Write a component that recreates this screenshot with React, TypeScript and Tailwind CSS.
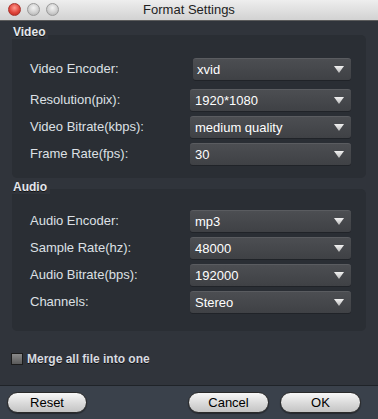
import React from "react";

const font = { fontFamily: '"Liberation Sans", Arial, sans-serif' };

function Arrow() {
  return (
    <svg width="10" height="7" viewBox="0 0 10 7" className="shrink-0">
      <defs>
        <linearGradient id="ag" x1="0" y1="0" x2="0" y2="1">
          <stop offset="0" stopColor="#f2f2f2" />
          <stop offset="1" stopColor="#b8b8b8" />
        </linearGradient>
      </defs>
      <polygon points="0,0 10,0 5,7" fill="url(#ag)" />
    </svg>
  );
}

function Select({ value, narrow }: { value: string; narrow?: boolean }) {
  return (
    <div
      className={`flex items-center justify-between h-[22px] rounded-[3px] bg-gradient-to-b from-[#4c4e52] to-[#3f4145] border-t border-[#5a5c60] shadow-[0_1px_0_#202328] text-white text-[13px] leading-[22px] ${
        narrow ? "w-[158px] ml-[3px] pl-[4px] pr-[7px]" : "w-[161px] pl-[5px] pr-[7px]"
      }`}
    >
      <span>{value}</span>
      <Arrow />
    </div>
  );
}

function Row({ label, value, narrow }: { label: string; value: string; narrow?: boolean }) {
  return (
    <div className="flex items-center justify-between">
      <span className="text-[13px] text-[#dde0e5]">{label}</span>
      <Select value={value} narrow={narrow} />
    </div>
  );
}

function Legend({ text, className }: { text: string; className: string }) {
  return (
    <div
      className={`relative z-10 self-start bg-[#30343b] h-[14px] leading-[14px] pl-[1px] pr-[3px] text-[12px] font-bold text-[#e4e7ec] [text-shadow:0_1px_0_#111] ${className}`}
    >
      {text}
    </div>
  );
}

function Button({ label, w }: { label: string; w: string }) {
  return (
    <div
      className={`${w} h-[21px] rounded-full border border-[#2a2a2a] bg-gradient-to-b from-[#f8f8f8] via-[#dcdcdc] to-[#c4c4c4] flex items-center justify-center text-[13px] text-black shadow-[0_1px_1px_rgba(0,0,0,0.4)]`}
    >
      {label}
    </div>
  );
}

export default function App() {
  return (
    <div className="w-[378px] h-[419px] flex flex-col overflow-hidden bg-[#30343b]" style={font}>
      {/* title bar */}
      <div className="relative h-[21px] shrink-0 bg-gradient-to-b from-[#eeeeee] to-[#d2d2d2] border-b border-[#5c5c5c] flex items-center justify-center">
        <div className="absolute left-[8px] top-[3px] flex gap-[6px]">
          <div className="w-[13px] h-[13px] rounded-full border border-[#a8332c] bg-[radial-gradient(circle_at_50%_35%,#ff9a8f,#e0463c_55%,#b3261e)]" />
          <div className="w-[13px] h-[13px] rounded-full border border-[#9a9a9a] bg-[radial-gradient(circle_at_50%_35%,#f4f4f4,#cfcfcf_55%,#a9a9a9)]" />
          <div className="w-[13px] h-[13px] rounded-full border border-[#9a9a9a] bg-[radial-gradient(circle_at_50%_35%,#f4f4f4,#cfcfcf_55%,#a9a9a9)]" />
        </div>
        <span className="text-[13px] text-[#222]">Format Settings</span>
      </div>

      <div className="flex-1 flex flex-col px-[12px] pt-[4px]">
        <Legend text="Video" className="" />
        <div className="mt-[-4px] h-[143px] rounded-[5px] bg-[#2a2e34] pl-[18px] pr-[15px] pt-[23px] flex flex-col">
          <Row label="Video Encoder:" value="xvid" narrow />
          <div className="mt-[9px] flex flex-col gap-[5px]">
            <Row label="Resolution(pix):" value="1920*1080" />
            <Row label="Video Bitrate(kbps):" value="medium quality" />
            <Row label="Frame Rate(fps):" value="30" />
          </div>
        </div>

        <Legend text="Audio" className="mt-[2px]" />
        <div className="mt-[-5px] h-[142px] rounded-[5px] bg-[#2a2e34] pl-[18px] pr-[15px] pt-[21px] flex flex-col gap-[5px]">
          <Row label="Audio Encoder:" value="mp3" />
          <Row label="Sample Rate(hz):" value="48000" />
          <Row label="Audio Bitrate(bps):" value="192000" />
          <Row label="Channels:" value="Stereo" />
        </div>

        <div className="mt-[22px] flex items-center gap-[4px] ml-[-1px] h-[12px]">
          <div className="w-[12px] h-[12px] border border-[#1c1c1c] bg-gradient-to-b from-[#8a8a8a] to-[#5a5a5a]" />
          <span className="text-[12px] leading-[14px] font-bold text-[#d8dbe0] [text-shadow:0_1px_0_#111]">Merge all file into one</span>
        </div>
      </div>

      {/* bottom bar */}
      <div className="h-[34px] shrink-0 border-t border-[#1f2328] bg-[#3a414b] flex items-start pt-[6px] px-[7px]">
        <Button label="Reset" w="w-[80px]" />
        <div className="flex-1" />
        <Button label="Cancel" w="w-[81px]" />
        <div className="w-[11px]" />
        <Button label="OK" w="w-[81px]" />
        <div className="w-[10px]" />
      </div>
    </div>
  );
}
